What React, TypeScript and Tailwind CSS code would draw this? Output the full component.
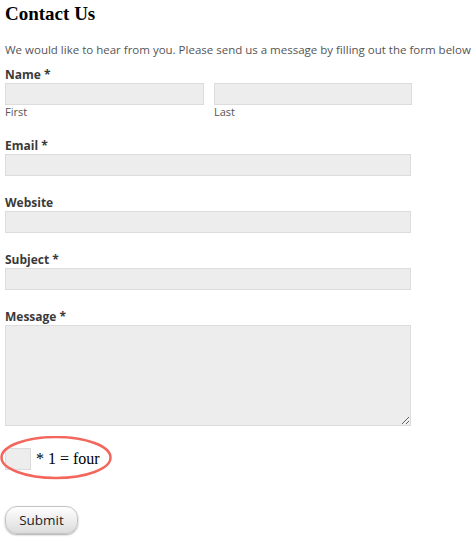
import React from 'react';

const sans = { fontFamily: '"Open Sans", "DejaVu Sans", sans-serif' };

function Field({ label, children }: { label: string; children: React.ReactNode }) {
  return (
    <div className="mb-[19px]">
      <label className="block text-[12px] leading-[16px] font-bold text-[#3a3a3a]">{label}</label>
      {children}
    </div>
  );
}

const inputCls = 'block h-[22px] border border-[#dcdcdc] bg-[#ededed] outline-none';

export default function App() {
  return (
    <div className="w-[475px] h-[545px] bg-white px-[5px] pt-[2px] overflow-hidden" style={sans}>
      <h1 className="text-[19px] leading-[24px] font-bold text-black" style={{ fontFamily: '"Liberation Serif", serif' }}>
        Contact Us
      </h1>
      <p className="mt-[16px] text-[11.5px] leading-[16px] text-[#555] whitespace-nowrap">
        We would like to hear from you. Please send us a message by filling out the form below
      </p>

      <form className="mt-[9px]" onSubmit={(e) => e.preventDefault()}>
        <Field label="Name *">
          <div className="flex gap-[10px]">
            <div>
              <input className={`${inputCls} w-[199px]`} />
              <span className="block text-[11px] leading-[14px] text-[#555]">First</span>
            </div>
            <div>
              <input className={`${inputCls} w-[198px]`} />
              <span className="block text-[11px] leading-[14px] text-[#555]">Last</span>
            </div>
          </div>
        </Field>
        <Field label="Email *">
          <input className={`${inputCls} w-[406px]`} />
        </Field>
        <Field label="Website">
          <input className={`${inputCls} w-[406px]`} />
        </Field>
        <Field label="Subject *">
          <input className={`${inputCls} w-[406px]`} />
        </Field>
        <div className="mt-[1px] mb-[22px]">
          <label className="block text-[12px] leading-[16px] font-bold text-[#3a3a3a]">Message *</label>
          <textarea className="block w-[406px] h-[101px] border border-[#dcdcdc] bg-[#ededed] outline-none" />
        </div>

        <div className="relative flex items-center gap-[5px]">
          <input className={`${inputCls} w-[26px]`} />
          <span className="text-[16px] leading-[22px] text-black" style={{ fontFamily: '"Liberation Serif", serif' }}>
            * 1 = four
          </span>
          <svg className="absolute left-[-5px] top-[-12px] pointer-events-none" width="114" height="44" viewBox="0 0 114 44">
            <ellipse cx="56" cy="21.5" rx="54.5" ry="20.5" fill="none" stroke="#f2665c" strokeWidth="2.5" />
          </svg>
        </div>

        <button
          type="submit"
          className="mt-[36px] w-[73px] h-[28px] rounded-[12px] border border-[#c4c4c4] bg-gradient-to-b from-white to-[#dcdcdc] text-[13.5px] text-[#222] shadow-[0_1px_2px_rgba(0,0,0,0.35)]"
        >
          Submit
        </button>
      </form>
    </div>
  );
}
